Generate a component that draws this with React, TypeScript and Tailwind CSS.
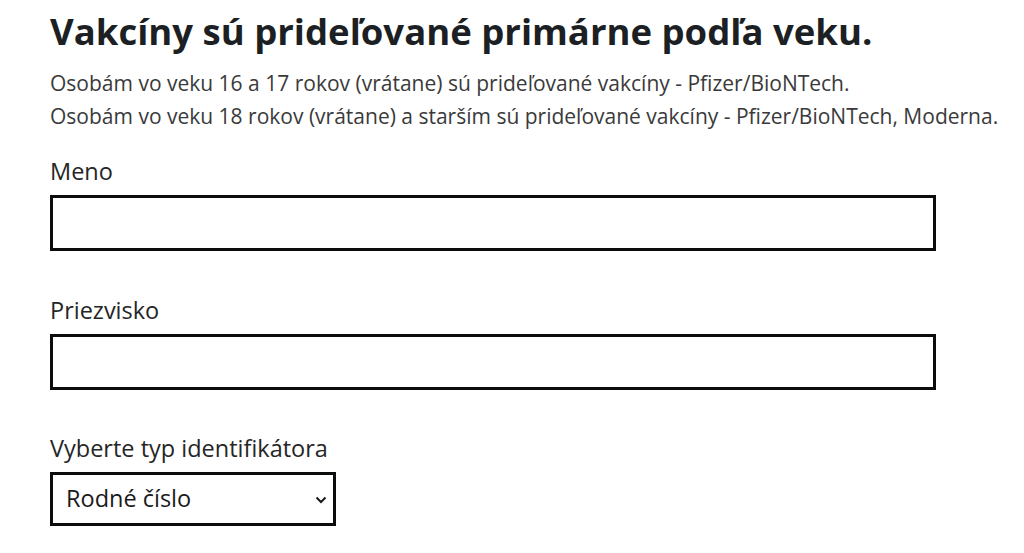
import React from "react";

const font = { fontFamily: '"Open Sans", "Noto Sans", sans-serif' };

function Field({ label, id, className }: { label: string; id: string; className?: string }) {
  return (
    <div className={className}>
      <label htmlFor={id} className="block text-[23.5px] leading-[33px] text-[#262626] mb-[7px]">
        {label}
      </label>
      <input
        id={id}
        type="text"
        className="block w-[886px] h-[56px] border-[3px] border-[#0b0c0c] bg-white px-3 text-[23.5px] outline-none"
      />
    </div>
  );
}

export default function App() {
  return (
    <div className="min-h-screen bg-white pl-[50px] pt-[9px]" style={font}>
      <h1 className="text-[36.5px] leading-[44px] font-bold text-[#1c1f23]">
        Vakcíny sú prideľované primárne podľa veku.
      </h1>
      <div className="mt-[14px] text-[21px] leading-[33px] text-[#3a3a3a]">
        <p>Osobám vo veku 16 a 17 rokov (vrátane) sú prideľované vakcíny - Pfizer/BioNTech.</p>
        <p>Osobám vo veku 18 rokov (vrátane) a starším sú prideľované vakcíny - Pfizer/BioNTech, Moderna.</p>
      </div>
      <Field label="Meno" id="meno" className="mt-[22px]" />
      <Field label="Priezvisko" id="priezvisko" className="mt-[43px]" />
      <div className="mt-[42px]">
        <label htmlFor="typ" className="block text-[23.5px] leading-[33px] text-[#262626] mb-[7px]">
          Vyberte typ identifikátora
        </label>
        <div className="relative w-[286px] h-[54px]">
          <select
            id="typ"
            className="block w-full h-full appearance-none border-[3px] border-[#0b0c0c] bg-white pl-[13px] pr-8 text-[23.5px] text-[#1a1a1a] outline-none"
            style={font}
            defaultValue="rc"
          >
            <option value="rc">Rodné číslo</option>
          </select>
          <svg
            className="pointer-events-none absolute right-[9px] top-[24px]"
            width="12"
            height="8"
            viewBox="0 0 12 8"
            fill="none"
          >
            <path d="M1.5 1.5 L6 6 L10.5 1.5" stroke="#1a1a1a" strokeWidth="2" />
          </svg>
        </div>
      </div>
    </div>
  );
}
